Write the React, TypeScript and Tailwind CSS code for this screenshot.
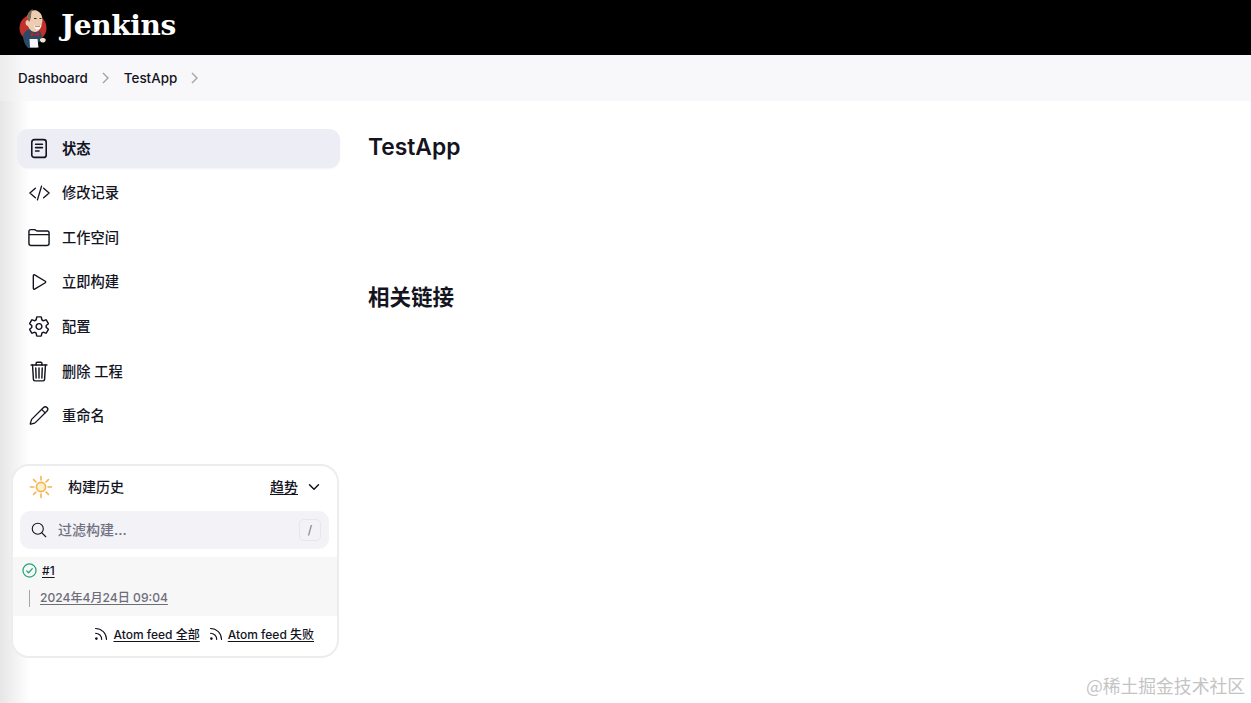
import {
  IoChevronDownOutline,
  IoCodeSlashOutline,
  IoFolderOutline,
  IoPlayOutline,
  IoSearchOutline,
  IoSettingsOutline,
  IoTrashOutline,
} from 'react-icons/io5';
import { Pencil } from 'lucide-react';

function DocIcon() {
  return (
    <svg viewBox="0 0 20 24" className="w-[17px] h-[21px]" fill="none" stroke="#14141f" strokeWidth="1.9" strokeLinecap="round">
      <rect x="1.5" y="1.5" width="17" height="21" rx="3" />
      <path d="M6 7h8M6 11h8M6 15h4" />
    </svg>
  );
}

function JenkinsLogo() {
  return (
    <svg viewBox="0 0 30 40" className="w-[30px] h-[40px] shrink-0">
      {/* red circle behind the butler */}
      <circle cx="14" cy="20" r="13.5" fill="#c2302c" />
      {/* jacket */}
      <path d="M4 28c1-4 4-7 8-7l4 3 5-1 2 5-1 5-3 1-1 6H9c-3-3-5-8-5-12z" fill="#2b4a66" />
      {/* head */}
      <path d="M9 6c2-4 8-5 11-2 3 2 4 7 3 11-1 5-3 9-7 9-3 0-6-3-7-6-2 0-3-3-2-5 1-1 1-1 2-1 0-2-1-4 0-6z" fill="#eccdb0" />
      <path d="M9 6c1-3 3-4 5-5-2 3-2 6-2 8-1 3-1 4-2 5l-1-2c0-2-1-4 0-6z" fill="#7a6a5c" />
      <path d="M15 10.500h2.500M20.500 10.500h2" stroke="#3a2a22" strokeWidth="1" />
      <path d="M15 17c2 1.500 5 1.500 7.500 0-.5 3-2 4.500-4 4.500s-3-2-3.500-4.500z" fill="#fff" />
      <path d="M16 18.200c1.500.6 3.500.6 5 0" stroke="#8c3a30" strokeWidth=".7" fill="none" />
      {/* bow tie */}
      <path d="M12 24l4 2.200 4-2.200v4.500l-4-1.500-4 1.500z" fill="#b5232a" />
      {/* apron and hand */}
      <path d="M10.500 31h8l1 8.500h-8.500z" fill="#f5f5f5" />
      <path d="M21 31c1.500-1.500 4.500-1.500 5.500 0 .8 1.500-.5 3.500-2.500 3.500-2 .2-3.500-1.500-3-3.500z" fill="#efe3d3" />
    </svg>
  );
}

function SunIcon() {
  return (
    <svg viewBox="0 0 24 24" className="w-[24px] h-[24px]" fill="none" stroke="#f6b44b" strokeWidth="1.6" strokeLinecap="round">
      <circle cx="12" cy="12" r="4.6" fill="#fdf0d0" />
      <path d="M12 1.500v3.400M12 19.100v3.400M1.500 12h3.400M19.100 12h3.400M4.600 4.600l2.400 2.400M17 17l2.400 2.400M4.600 19.400L7 17M17 7l2.400-2.400" />
    </svg>
  );
}

function RssIcon() {
  return (
    <svg viewBox="0 0 14 14" className="w-[14px] h-[14px] -translate-y-[1px]" fill="none" stroke="#14141f" strokeWidth="1.1" strokeLinecap="round">
      <circle cx="2.400" cy="11.600" r="1.300" fill="#14141f" stroke="none" />
      <path d="M1.500 6.200c3.500 0 6.200 2.700 6.200 6.300M1.500 1.500c6.200 0 11 4.900 11 11" />
    </svg>
  );
}

function CheckCircle() {
  return (
    <svg viewBox="0 0 16 16" className="w-[15px] h-[15px]" fill="none" stroke="#1ea672" strokeWidth="1.3" strokeLinecap="round" strokeLinejoin="round">
      <circle cx="8" cy="8" r="7" />
      <path d="M5 8.400l2 2 4-4.400" />
    </svg>
  );
}

const menu = [
  { label: '状态', icon: <DocIcon />, active: true },
  { label: '修改记录', icon: <IoCodeSlashOutline className="text-[22px]" /> },
  { label: '工作空间', icon: <IoFolderOutline className="text-[23px]" /> },
  { label: '立即构建', icon: <IoPlayOutline className="text-[22px]" /> },
  { label: '配置', icon: <IoSettingsOutline className="text-[23px]" /> },
  { label: '删除 工程', icon: <IoTrashOutline className="text-[23px]" /> },
  { label: '重命名', icon: <Pencil size={21} strokeWidth={1.5} /> },
];

export default function App() {
  return (
    <div className="relative h-[703px] overflow-hidden bg-[linear-gradient(to_right,#e6e6e6,#ffffff_30px)] text-[#14141f] font-['Inter','Noto_Sans_CJK_SC',sans-serif]">
      <header className="h-[55px] bg-black flex items-center pl-[19px] gap-[12px]">
        <JenkinsLogo />
        <span className="text-white text-[28px] font-bold leading-none font-['DejaVu_Serif',serif] tracking-[-0.4px] -translate-y-[2px]">Jenkins</span>
      </header>

      <nav className="h-[46px] bg-[linear-gradient(to_right,#ececec,#f8f8fa_24px)] flex items-center pl-[18px] text-[13.4px] font-medium">
        <span>Dashboard</span>
        <svg viewBox="0 0 8 12" className="w-[8px] h-[12px] ml-[14px] mr-[14px]" fill="none" stroke="#a3a3a8" strokeWidth="1.4"><path d="M1 1l5 5-5 5" /></svg>
        <span>TestApp</span>
        <svg viewBox="0 0 8 12" className="w-[8px] h-[12px] ml-[14px]" fill="none" stroke="#a3a3a8" strokeWidth="1.4"><path d="M1 1l5 5-5 5" /></svg>
      </nav>

      <div className="flex">
        <aside className="w-[340px] shrink-0 pl-[11px] pt-[28px]">
          <ul className="flex flex-col gap-[5.67px] pl-[6px]">
            {menu.map((item) => (
              <li
                key={item.label}
                className={
                  item.active
                    ? 'h-[39px] flex items-center rounded-[11px] bg-[#edeef5] shadow-[0_1px_2px_#f3f3f6] text-[14.25px] font-semibold'
                    : 'h-[39px] flex items-center rounded-[11px] pb-[1px] text-[14.25px] font-medium'
                }
              >
                <span className="w-[45px] flex justify-center shrink-0 -translate-x-[0.5px]">{item.icon}</span>
                <span>{item.label}</span>
              </li>
            ))}
          </ul>

          <section className="mt-[28px] w-[328px] h-[194px] rounded-[18px] border-2 border-[#ededf1] bg-white flex flex-col overflow-hidden">
            <div className="h-[45px] flex items-center pl-[16px] pr-[15px] pb-[3px] shrink-0">
              <SunIcon />
              <span className="ml-[15px] text-[14px] font-medium">构建历史</span>
              <span className="ml-auto text-[14px] font-medium underline underline-offset-2">趋势</span>
              <IoChevronDownOutline className="ml-[8px] text-[16px]" />
            </div>
            <div className="ml-[7px] mr-[8px] h-[38px] shrink-0 rounded-[10px] bg-[#f2f2f7] flex items-center pl-[10px] pr-[8px]">
              <IoSearchOutline className="text-[18px]" />
              <span className="ml-[10px] pb-[1px] text-[14px] font-medium text-[#71717f]">过滤构建...</span>
              <span className="ml-auto w-[22px] h-[22px] rounded-[5px] border border-[#e6e6ec] flex items-center justify-center text-[12px] text-[#71717f]">/</span>
            </div>
            <div className="mt-[8px] h-[59px] shrink-0 bg-[#f7f7f8] pl-[9px] pt-[6px]">
              <div className="flex items-center h-[16px]">
                <CheckCircle />
                <span className="ml-[5px] text-[12px] font-medium underline underline-offset-2">#1</span>
              </div>
              <div className="flex items-center mt-[10px] pl-[7px]">
                <span className="w-px h-[17px] bg-[#a5a5ad]" />
                <span className="ml-[10px] text-[12.1px] font-medium text-[#6d6d78] underline underline-offset-2">2024年4月24日 09:04</span>
              </div>
            </div>
            <div className="flex-1 flex items-center justify-end pr-[23px] pb-[1px] text-[12px] font-medium gap-[9px]">
              <span className="flex items-center gap-[5px]"><RssIcon /><span className="underline underline-offset-2">Atom feed 全部</span></span>
              <span className="flex items-center gap-[5px]"><RssIcon /><span className="underline underline-offset-2">Atom feed 失败</span></span>
            </div>
          </section>
        </aside>

        <main className="pl-[28px] pt-[30px]">
          <h1 className="text-[22.8px] leading-[32px] font-semibold">TestApp</h1>
          <h2 className="mt-[118px] text-[21.5px] leading-[32px] font-semibold">相关链接</h2>
        </main>
      </div>

      <span className="absolute right-[6px] bottom-[6px] text-[17.8px] leading-[24px] text-[#c4c4c4] font-['Noto_Sans_CJK_SC',sans-serif]">@稀土掘金技术社区</span>
    </div>
  );
}
